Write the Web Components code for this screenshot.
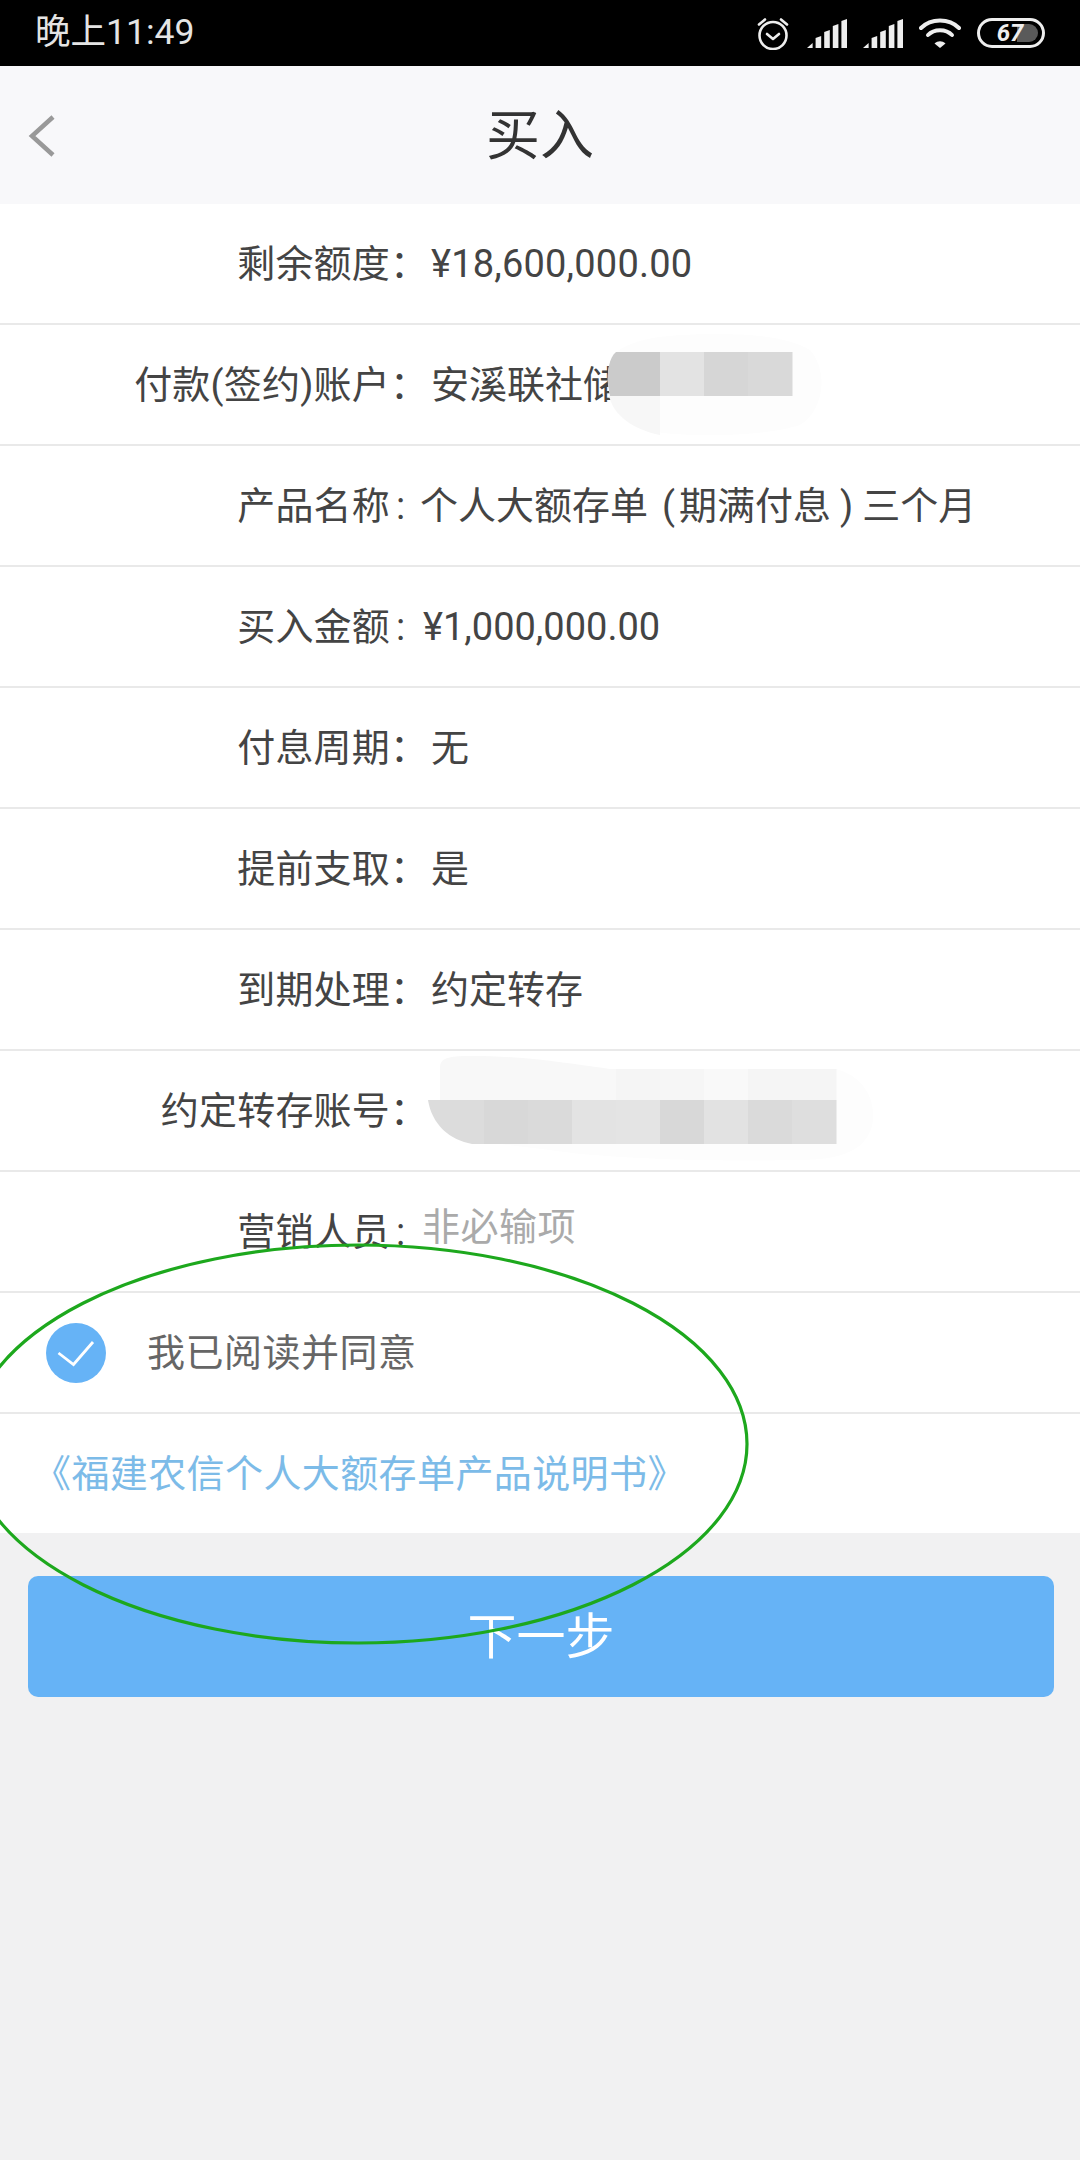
<!DOCTYPE html>
<html lang="zh-CN">
<head>
<meta charset="utf-8">
<title>买入</title>
<style>
  html, body { margin: 0; padding: 0; }
  body { width: 1080px; height: 2160px; background: #f1f1f2; overflow: hidden; position: relative;
         font-family: Roboto, "Noto Sans CJK SC", sans-serif; }
  .open { margin: 0 4px 0 14px; }
  .close { margin: 0 9px 0 9px; }
  .nudge { margin-left: 3px; }
  .wide { letter-spacing: .2px; }
  .ph { letter-spacing: .5px; }
</style>
</head>
<body>
<status-bar time="晚上11:49" battery="67"></status-bar>
<nav-bar>买入</nav-bar>
<form-list>
  <form-row label="剩余额度"><span class="wide">¥18,600,000.00</span></form-row>
  <form-row label="付款(签约)账户">安溪联社储</form-row>
  <form-row label="产品名称" compact>个人大额存单<span class="open">(</span>期满付息<span class="close">)</span>三个月</form-row>
  <form-row label="买入金额" compact><span class="nudge">¥1,000,000.00</span></form-row>
  <form-row label="付息周期">无</form-row>
  <form-row label="提前支取">是</form-row>
  <form-row label="到期处理">约定转存</form-row>
  <form-row label="约定转存账号"></form-row>
  <form-row label="营销人员" compact placeholder><span class="ph">非必输项</span></form-row>
  <agree-row>我已阅读并同意</agree-row>
  <link-row>《福建农信个人大额存单产品说明书》</link-row>
</form-list>
<primary-button>下一步</primary-button>
<markup-layer></markup-layer>

<script>
function shadow(el, html) { el.attachShadow({ mode: 'open' }).innerHTML = html; }
const FONT = 'Roboto, "Noto Sans CJK SC", sans-serif';

customElements.define('status-bar', class extends HTMLElement {
  connectedCallback() {
    const bars = [[0,24,7],[8.6,17,12],[17.2,11,18],[25.8,5,24],[34.4,0,29]].map(([x,y,h], i) => {
      return `<path d="M${x} ${y+h}V${y+(i===0?5:2)}L${x+5.6} ${y}V${y+h}Z"/>`;
    }).join('');
    const signal = `<svg width="40" height="29" viewBox="0 0 40 29" fill="#eee">${bars}</svg>`;
    shadow(this, `<style>
      :host { display: flex; align-items: center; height: 66px; background: #000; box-sizing: border-box; padding: 0 35px 0 35px; }
      .time { font: 35.5px/1 ${FONT}; color: #e4e4e4; flex: 1; }
      .icons { display: flex; align-items: center; }
      svg { display: block; }
      .sig { margin-left: 17px; display: flex; } .sig + .sig { margin-left: 16px; }
      .wifi { margin-left: 16px; } .batt { margin-left: 16px; }
    </style>
    <span class="time">${this.getAttribute('time')}</span>
    <div class="icons">
      <svg width="34" height="34" viewBox="0 0 34 34" fill="none" stroke="#eee" stroke-width="2.6" stroke-linecap="round" stroke-linejoin="round">
        <circle cx="17" cy="19.5" r="13.5"/>
        <path d="M11 18l6 5 6-5"/>
        <path d="M3 8.5L9 3.5M31 8.5L25 3.5"/>
      </svg>
      <span class="sig">${signal}</span>
      <span class="sig">${signal}</span>
      <svg class="wifi" width="42" height="30" viewBox="0 0 42 30" fill="none" stroke="#eee" stroke-width="4" stroke-linecap="round">
        <path d="M2 10C12 0 30 0 40 10"/>
        <path d="M9 17C15 10.5 27 10.5 33 17"/>
        <path d="M15.5 25.5L21 30L26.5 25.5C23 22.5 19 22.5 15.5 25.5Z" fill="#eee" stroke="none"/>
      </svg>
      <svg class="batt" width="68" height="30" viewBox="0 0 68 30">
        <rect x="1.5" y="1.5" width="65" height="27" rx="13.5" fill="#000" stroke="#eee" stroke-width="3"/>
        <path d="M40 6H52A9 9 0 0 1 52 24H40Z" fill="#5a5a5a"/>
        <text x="33" y="23" text-anchor="middle" font-family="Roboto, sans-serif" font-size="24" font-weight="700" font-style="italic" fill="#eee">${this.getAttribute('battery')}</text>
      </svg>
    </div>`);
  }
});

customElements.define('nav-bar', class extends HTMLElement {
  connectedCallback() {
    shadow(this, `<style>
      :host { display: flex; align-items: center; justify-content: center; position: relative; height: 138px; background: #f8f8fa; }
      .title { font: 54px/1 ${FONT}; color: #333; margin-top: 4px; }
      .back { position: absolute; left: 28px; top: 49px; }
    </style>
    <svg class="back" width="28" height="42" viewBox="0 0 28 42" fill="none" stroke="#999" stroke-width="4.5"><path d="M25 2L4 21L25 40"/></svg>
    <span class="title"><slot></slot></span>`);
  }
});

customElements.define('form-list', class extends HTMLElement {
  connectedCallback() {
    shadow(this, `<style>:host { display: flex; flex-direction: column; background: #fff; }</style><slot></slot>`);
  }
});

customElements.define('form-row', class extends HTMLElement {
  connectedCallback() {
    const compact = this.hasAttribute('compact');
    const ph = this.hasAttribute('placeholder');
    shadow(this, `<style>
      :host { display: flex; align-items: center; height: 121px; box-sizing: border-box; border-bottom: 2px solid #e9e9e9; font: 38px/1 ${FONT}; color: #444; }
      .label { width: 390px; text-align: right; white-space: nowrap; flex: none; letter-spacing: .2px; }
      .colon { width: ${compact ? 30 : 41}px; flex: none; white-space: nowrap; box-sizing: border-box; ${compact ? 'padding-left: 6px;' : ''} }
      .value { white-space: nowrap; color: ${ph ? '#aaa' : '#444'}; ${ph ? 'position: relative; top: -5px; left: 2px;' : ''} }
    </style>
    <span class="label">${this.getAttribute('label')}</span><span class="colon">${compact ? ':' : '：'}</span><span class="value"><slot></slot></span>`);
  }
});

customElements.define('agree-row', class extends HTMLElement {
  connectedCallback() {
    shadow(this, `<style>
      :host { display: flex; align-items: center; height: 121px; box-sizing: border-box; border-bottom: 2px solid #e9e9e9; padding-left: 46px; gap: 41px; font: 38px/1 ${FONT}; color: #666; letter-spacing: .5px; }
      svg { display: block; flex: none; }
    </style>
    <svg width="60" height="60" viewBox="0 0 60 60"><circle cx="30" cy="30" r="30" fill="#66b3f6"/><path d="M12.5 30L27.5 41.5L47 19" fill="none" stroke="#fff" stroke-width="2.8"/></svg>
    <span><slot></slot></span>`);
  }
});

customElements.define('link-row', class extends HTMLElement {
  connectedCallback() {
    shadow(this, `<style>
      :host { display: flex; align-items: center; height: 119px; padding-left: 33px; font: 38px/1 ${FONT}; color: #7cbbe8; white-space: nowrap; letter-spacing: .4px; }
    </style><slot></slot>`);
  }
});

customElements.define('primary-button', class extends HTMLElement {
  connectedCallback() {
    shadow(this, `<style>
      :host { display: flex; align-items: center; justify-content: center; height: 121px; margin: 43px 26px 0 28px; background: #66b3f6; border-radius: 10px; color: #fff; font: 49px/1 ${FONT}; padding-top: 1px; box-sizing: border-box; }
    </style><slot></slot>`);
  }
});

customElements.define('markup-layer', class extends HTMLElement {
  connectedCallback() {
    const cells = (y, h, x0, list) => list.map((c, i) => `<rect x="${x0 + i * 44}" y="${y}" width="44.5" height="${h}" fill="${c}"/>`).join('');
    shadow(this, `<style>
      :host { position: absolute; left: 0; top: 0; width: 1080px; height: 2160px; pointer-events: none; }
      svg { display: block; }
    </style>
    <svg width="1080" height="2160" viewBox="0 0 1080 2160" fill="none">
      <path d="M616 352C609 358 607 372 608 384C610 405 622 425 650 431C680 437 760 438 800 425C825 410 828 370 810 350C780 332 720 333 680 335C650 337 630 342 616 352Z" fill="#fdfdfd"/>
      <path d="M609 396H660V435C640 431 615 420 609 396Z" fill="#f7f7f7"/>
      <path d="M616 352C609 358 607 372 608 384L610 396H660V352Z" fill="#cbcbcb"/>
      ${cells(352, 44, 660, ['#e3e3e3', '#d6d6d6', '#d9d9d9'])}

      <path d="M836 1069C860 1075 875 1095 873 1120C870 1145 850 1160 800 1160C700 1162 600 1158 550 1150L500 1144H836Z" fill="#fdfdfd"/>
      <path d="M440 1068C440 1058 448 1056 470 1056C530 1056 570 1064 610 1069H616V1100H440Z" fill="#f8f8f8"/>
      ${cells(1069, 31, 616, ['#f5f5f5', '#f6f6f6', '#f9f9f9', '#f5f5f5', '#f5f5f5'])}
      <path d="M428 1100H484V1144H472C450 1140 432 1125 428 1100Z" fill="#dcdcdc"/>
      ${cells(1100, 44, 484, ['#d8d8d8', '#dadada', '#e3e3e3', '#e4e4e4', '#d8d8d8', '#e2e2e2', '#dadada', '#dedede'])}

      <ellipse cx="358" cy="1444" rx="389" ry="199" stroke="#1da81d" stroke-width="3.2"/>
    </svg>`);
  }
});
</script>
</body>
</html>
